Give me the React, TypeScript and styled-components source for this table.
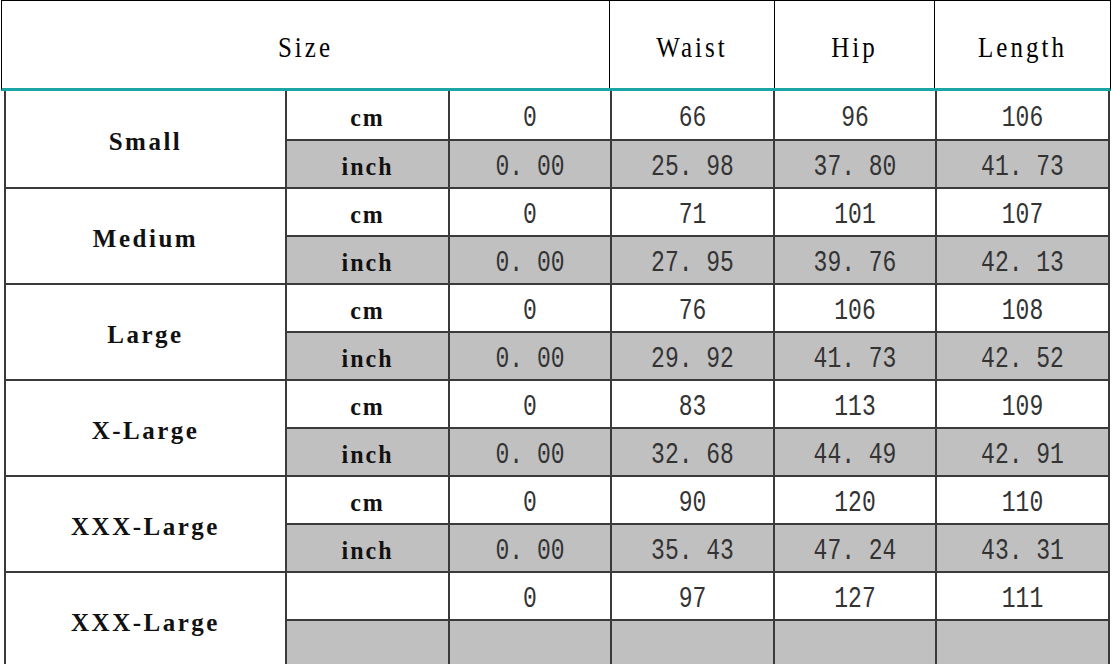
import React from "react";
import styled, { createGlobalStyle } from "styled-components";

const Global = createGlobalStyle`
  html, body { margin: 0; padding: 0; background: #fff; overflow: hidden; }
  body { font-family: "Liberation Mono", "DejaVu Sans Mono", monospace; }
`;

const Page = styled.div`
  width: 1112px;
  height: 664px;
  overflow: hidden;
  background: #fff;
`;

const Header = styled.div`
  margin-left: 1px;
  width: 1110px;
  box-sizing: border-box;
  height: 91px;
  border: 1px solid #000;
  border-bottom: 3px solid #1aa6a6;
  display: grid;
  grid-template-columns: 607px 164px 159px 1fr;
  column-gap: 1px;
  background: #000;
`;

const HeadCell = styled.div`
  background: #fff;
  display: flex;
  align-items: center;
  justify-content: center;
  font-family: "Liberation Serif", serif;
  font-size: 25px;
  letter-spacing: 3px;
  color: #000;
  padding-top: 6px;
  box-sizing: border-box;
`;

const Tall = styled.span<{ $s?: number }>`
  display: inline-block;
  transform: scaleY(${(p) => p.$s ?? 1.15});
`;

const Body = styled.div`
  margin-left: 4px;
  width: 1106px;
  box-sizing: border-box;
  padding: 0 2px 2px 2px;
  background: #3a3a3a;
  display: grid;
  grid-template-columns: 279px 161px 160px 161px 160px 1fr;
  grid-template-rows: 48px;
  grid-auto-rows: 46px;
  gap: 2px;
`;

const SizeCell = styled.div`
  grid-row: span 2;
  background: #fff;
  display: flex;
  align-items: center;
  justify-content: center;
  font-family: "Liberation Serif", serif;
  font-weight: bold;
  font-size: 25px;
  letter-spacing: 2.5px;
  color: #111;
  padding-top: 6px;
  box-sizing: border-box;
`;

const Cell = styled.div<{ $grey?: boolean; $bold?: boolean }>`
  background: ${(p) => (p.$grey ? "#c0c0c0" : "#fff")};
  display: flex;
  align-items: center;
  justify-content: center;
  font-family: ${(p) => (p.$bold ? '"Liberation Serif", serif' : '"Liberation Mono", monospace')};
  font-weight: ${(p) => (p.$bold ? "bold" : "normal")};
  font-size: ${(p) => (p.$bold ? "24px" : "23px")};
  letter-spacing: ${(p) => (p.$bold ? "2px" : "0")};
  color: ${(p) => (p.$bold ? "#111" : "#333")};
  padding-top: 6px;
  box-sizing: border-box;
`;

type Group = {
  name: string;
  cm: string[];
  inch: string[];
  units: [string, string];
};

const groups: Group[] = [
  { name: "Small", units: ["cm", "inch"], cm: ["0", "66", "96", "106"], inch: ["0. 00", "25. 98", "37. 80", "41. 73"] },
  { name: "Medium", units: ["cm", "inch"], cm: ["0", "71", "101", "107"], inch: ["0. 00", "27. 95", "39. 76", "42. 13"] },
  { name: "Large", units: ["cm", "inch"], cm: ["0", "76", "106", "108"], inch: ["0. 00", "29. 92", "41. 73", "42. 52"] },
  { name: "X-Large", units: ["cm", "inch"], cm: ["0", "83", "113", "109"], inch: ["0. 00", "32. 68", "44. 49", "42. 91"] },
  { name: "XXX-Large", units: ["cm", "inch"], cm: ["0", "90", "120", "110"], inch: ["0. 00", "35. 43", "47. 24", "43. 31"] },
  { name: "XXX-Large", units: ["", ""], cm: ["0", "97", "127", "111"], inch: ["", "", "", ""] },
];

export default function App() {
  return (
    <Page>
      <Global />
      <Header>
        <HeadCell><Tall>Size</Tall></HeadCell>
        <HeadCell><Tall>Waist</Tall></HeadCell>
        <HeadCell><Tall>Hip</Tall></HeadCell>
        <HeadCell><Tall>Length</Tall></HeadCell>
      </Header>
      <Body>
        {groups.map((g, i) => (
          <React.Fragment key={i}>
            <SizeCell><Tall $s={1.05}>{g.name}</Tall></SizeCell>
            <Cell $bold><Tall $s={1.05}>{g.units[0]}</Tall></Cell>
            {g.cm.map((v, j) => (
              <Cell key={"c" + j}><Tall $s={1.3}>{v}</Tall></Cell>
            ))}
            <Cell $grey $bold><Tall $s={1.05}>{g.units[1]}</Tall></Cell>
            {g.inch.map((v, j) => (
              <Cell $grey key={"i" + j}><Tall $s={1.3}>{v}</Tall></Cell>
            ))}
          </React.Fragment>
        ))}
      </Body>
    </Page>
  );
}
